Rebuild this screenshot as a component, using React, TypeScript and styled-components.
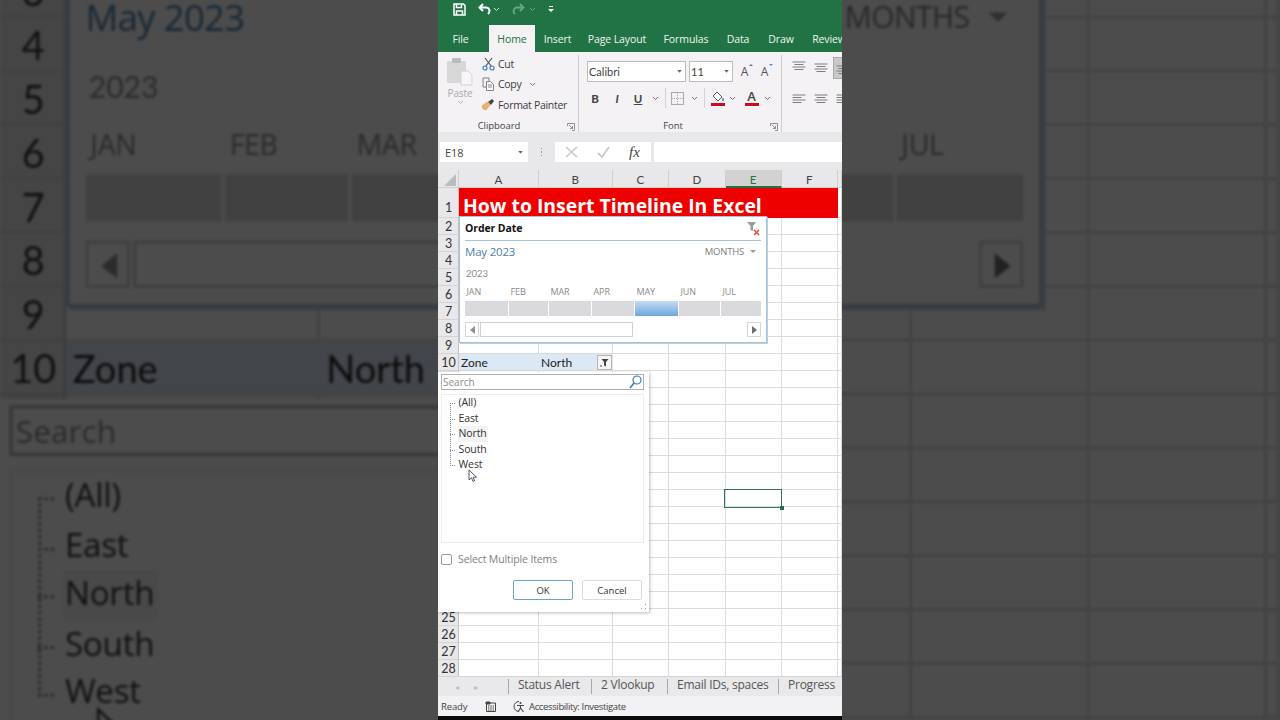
import React from "react";
import styled, { createGlobalStyle } from "styled-components";

const Global = createGlobalStyle`
  html, body { margin: 0; padding: 0; background: #000; }
  #root { width: 1280px; height: 720px; overflow: hidden; }
  * { box-sizing: border-box; }
`;
const UI = `"Open Sans", "Noto Sans", sans-serif`;
const CAL = `Lato, "Liberation Sans", sans-serif`;

const Page = styled.div`position: relative; width: 1280px; height: 720px; overflow: hidden; background: #4d4d4d; display: flex; justify-content: center;`;
const Backdrop = styled.div`
  position: absolute; left: 0; top: -241px; width: 404px; height: 507px;
  transform-origin: 0 0; transform: scale(3.168); filter: brightness(.3) blur(.45px);
`;
const Workbook = styled.div`position: relative; width: 404px; height: 720px; background: #fff; display: flex; flex-direction: column; overflow: hidden; font-family: ${UI}; color: #333;`;

const TitleBar = styled.div`height: 25px; flex: none; background: #217346; display: flex; align-items: center; padding: 0 0 7px 15px; color: #fff;`;
const QuickBtn = styled.span<{ $w: number; $faded?: boolean }>`width: ${p => p.$w}px; display: flex; align-items: center; opacity: ${p => (p.$faded ? 0.35 : 1)};`;
const TabBar = styled.div`height: 27px; flex: none; background: #217346; display: flex; align-items: stretch; padding-left: 4px; overflow: hidden;`;
const Tab = styled.div<{ $active?: boolean; $w: number }>`
  flex: none; width: ${p => p.$w}px; display: flex; align-items: center; justify-content: center; padding-top: 1px;
  font-size: 10.5px; letter-spacing: -.1px; white-space: nowrap;
  margin-left: ${p => (p.$active ? "10px" : "0")};
  color: ${p => (p.$active ? "#217346" : "#eef5f0")}; background: ${p => (p.$active ? "#f4f2f4" : "transparent")};
`;

const Ribbon = styled.div`height: 80px; flex: none; background: #f4f2f5; display: flex; overflow: hidden;`;
const Group = styled.div<{ $w: number }>`flex: none; width: ${p => p.$w}px; height: 78px; position: relative; border-right: 1px solid #cfcdd0; margin-top: 3px; display: flex; flex-direction: column;`;
const GroupBody = styled.div`flex: 1; display: flex;`;
const GroupLabel = styled.div<{ $pr: number }>`height: 14px; padding-right: ${p => p.$pr}px; text-align: center; font-size: 9.5px; letter-spacing: -.05px; color: #444; line-height: 13px;`;
const Launcher = styled.span`position: absolute; right: 3px; bottom: 2px; width: 8px; height: 8px; display: flex;`;

const PasteCol = styled.div`width: 43px; flex: none; display: flex; flex-direction: column; align-items: center; padding: 3px 0 0 1px; color: #a9a8aa; font-size: 10px; letter-spacing: -.1px;`;
const PasteLabel = styled.div`margin-top: 1px; line-height: 13px;`;
const ClipCol = styled.div`display: flex; flex-direction: column; gap: 3.5px;`;
const ClipRow = styled.div`display: flex; align-items: center; gap: 3px; height: 17px; font-size: 10.5px; letter-spacing: -.3px; color: #3c3c3c; white-space: nowrap;`;
const ClipIcon = styled.span`width: 14px; display: flex; justify-content: center;`;
const CopyChev = styled.span`margin-left: 5px; display: flex;`;

const FontBody = styled.div`flex: 1; display: flex; flex-direction: column; padding: 6px 0 0 8px;`;
const FontTop = styled.div`display: flex; align-items: center; gap: 3.5px; height: 20px;`;
const Combo = styled.div<{ $w: number }>`width: ${p => p.$w}px; height: 21px; background: #fff; border: 1px solid #bdbdbd; display: flex; align-items: center; justify-content: space-between; padding: 0 3px 0 1px; font-family: ${CAL}; font-size: 11px; color: #444;`;
const GrowBtn = styled.span`margin-left: 2.5px; width: 14px; font-size: 12px; color: #555; font-family: ${UI}; position: relative; display: flex; justify-content: center; &:first-of-type { margin-left: 1px; }`;
const Caret = styled.span<{ $d: boolean }>`position: absolute; right: -1px; top: 1px; border-left: 2px solid transparent; border-right: 2px solid transparent; ${p => (p.$d ? "border-top: 2px solid #4a90c8;" : "border-bottom: 2px solid #777;")}`;
const FontBottom = styled.div`display: flex; align-items: center; height: 24px; margin: 5px 0 0 -8px; padding-left: 8px;`;
const FmtBtn = styled.span<{ $w: number; $i?: boolean; $u?: boolean; $b?: boolean }>`
  width: ${p => p.$w}px; flex: none; display: flex; justify-content: center; font-family: ${CAL}; font-size: 11.5px; color: #444;
  font-weight: ${p => (p.$b ? 900 : 700)}; font-style: ${p => (p.$i ? "italic" : "normal")}; text-decoration: ${p => (p.$u ? "underline" : "none")};
`;
const Sep = styled.span`width: 1px; height: 20px; flex: none; background: #d4d2d5; margin-right: 5px;`;
const ColorBtn = styled.span<{ $ml?: number }>`width: 15px; flex: none; margin-left: ${p => p.$ml ?? 0}px; display: flex; flex-direction: column; align-items: center; font-size: 13px; font-weight: 600; line-height: 11px; color: #444;`;
const ColorBar = styled.span`width: 14px; height: 3px; background: #cc0a1a; margin-top: 1px;`;
const AlignBody = styled.div`flex: 1; display: flex; flex-direction: column; gap: 17px; padding: 9px 0 0 10px;`;
const AlignRow = styled.div`display: flex; gap: 8px; align-items: center; height: 14px;`;
const AlignBox = styled.span<{ $on?: boolean }>`width: 14px; height: ${p => (p.$on ? "20px" : "14px")}; display: flex; align-items: center; margin-left: ${p => (p.$on ? "-2px" : "0")}; padding-left: ${p => (p.$on ? "2px" : "0")}; background: ${p => (p.$on ? "#c9c8ca" : "transparent")}; outline: ${p => (p.$on ? "1px solid #aaa" : "none")};`;

const FormulaBar = styled.div`height: 38px; flex: none; background: #e8e7e9; display: flex; align-items: flex-start; padding: 10px 0 0 2px;`;
const NameBox = styled.div`width: 88px; height: 20px; background: #fff; display: flex; align-items: center; justify-content: space-between; padding: 0 5px 0 5px; font-size: 11px; letter-spacing: -.1px; color: #444;`;
const Dots = styled.div`width: 27px; height: 20px; display: flex; flex-direction: column; align-items: center; justify-content: center; gap: 2px;`;
const Dot = styled.i`width: 1.5px; height: 1.5px; background: #999; display: block;`;
const FxBox = styled.div`width: 96px; height: 20px; background: #fff; display: flex; align-items: center; padding-left: 10px; gap: 19px;`;
const Fx = styled.span`font-family: "Liberation Serif", serif; font-style: italic; font-size: 15px; color: #444;`;
const FormulaInput = styled.div`flex: 1; height: 20px; background: #fff; margin-left: 3px;`;

const COLS = "21px 80px 73.5px 56.5px 56.5px 56px 56.5px 4px";
const SheetBox = styled.div`position: relative; width: 404px; height: 506px; flex: none; background: #fff; overflow: hidden; font-family: ${CAL};`;
const Row = styled.div<{ $h: number }>`display: grid; grid-template-columns: ${COLS}; height: ${p => p.$h}px;`;
const Corner = styled.div`background: #e8e7e9; position: relative; border-right: 1px solid #cfcfcf; border-bottom: 1px solid #cfcfcf; display: flex; align-items: flex-end; justify-content: flex-end; padding: 0 2px 1px 0;`;
const ColHead = styled.div<{ $sel?: boolean }>`
  background: ${p => (p.$sel ? "#d3d1d2" : "#e8e7e9")}; border-right: 1px solid #cfcfcf;
  border-bottom: ${p => (p.$sel ? "2px solid #217346" : "1px solid #cfcfcf")};
  display: flex; align-items: center; justify-content: center; padding-top: 2px; font-size: 11.5px; color: ${p => (p.$sel ? "#217346" : "#444")};
`;
const RowHead = styled.div<{ $tall?: boolean }>`background: #e8e7e9; border-right: 1px solid #c4c4c4; border-bottom: 1px solid #d4d4d4; display: flex; align-items: center; justify-content: center; font-size: 12.5px; color: #333; padding: ${p => (p.$tall ? "9px 0 0 1px" : "0 0 0 1px")};`;
const Cell = styled.div<{ $fill?: boolean }>`background: ${p => (p.$fill ? "#dde8f5" : "#fff")}; border-right: 1px solid ${p => (p.$fill ? "#dde8f5" : "#dcdcdc")}; border-bottom: 1px solid #dcdcdc; display: flex; align-items: center; padding-left: 2px; font-size: 12px; font-weight: 400; color: #222; position: relative;`;
const TitleCell = styled.div`grid-column: 2 / span 6; background: #ee0000; color: #fff; font-family: "Open Sans", sans-serif; font-weight: 700; font-size: 19.4px; padding: 4px 0 0 4px; display: flex; align-items: center; white-space: nowrap; overflow: hidden;`;
const FilterBtn = styled.span`position: absolute; right: 0; top: 1px; width: 15px; height: 15px; background: #f6f6f6; border: 1px solid #b4b4b4; display: flex; align-items: center; justify-content: center;`;

const Slicer = styled.div`position: absolute; left: 21px; top: 46px; width: 308px; height: 127px; background: #fff; border: 1px solid #a4c3dd; box-shadow: 1px 1px 0 #b9d0e3; padding: 0 5px; display: flex; flex-direction: column;`;
const SlicerHead = styled.div`height: 24px; flex: none; border-bottom: 1px solid #a4c3dd; display: flex; align-items: center; justify-content: space-between; font-family: ${UI}; font-weight: 700; font-size: 10.5px; letter-spacing: -.1px; color: #111; padding-bottom: 1px;`;
const SlicerRange = styled.div`height: 21px; flex: none; display: flex; align-items: center; justify-content: space-between; padding-right: 5px;`;
const RangeLabel = styled.span`font-size: 11.5px; color: #4b7fab; font-family: ${UI}; letter-spacing: -.2px;`;
const LevelLabel = styled.span`font-size: 9.5px; color: #808080; display: flex; align-items: center; gap: 6px; font-family: ${UI}; letter-spacing: -.2px;`;
const TriDown = styled.i`border-left: 3px solid transparent; border-right: 3px solid transparent; border-top: 3px solid #9a9a9a; display: block;`;
const YearLabel = styled.div`height: 15px; margin-top: 4px; padding-left: 1px; font-size: 9.5px; color: #8c8c8c; line-height: 15px;`;
const MONTHS: [string, number, boolean?][] = [["JAN", 43], ["FEB", 39], ["MAR", 42], ["APR", 42], ["MAY", 43, true], ["JUN", 41], ["JUL", 40]];
const MonthGrid = styled.div`display: flex; gap: 1px; margin-top: 4px;`;
const MonthCol = styled.div<{ $w: number }>`width: ${p => p.$w}px; flex: none;`;
const MonthName = styled.div`height: 16px; padding-left: 1.5px; font-size: 9px; color: #8a8a8a; font-family: ${UI}; letter-spacing: -.1px; line-height: 13px;`;
const MonthBar = styled.div<{ $on?: boolean }>`height: 15px; background: ${p => (p.$on ? "linear-gradient(#c6dcf1, #6fa6dc)" : "#dad9db")};`;
const ScrollRow = styled.div`display: flex; height: 15px; margin-top: 6px; gap: 1px;`;
const ScrollBtn = styled.div`width: 14px; height: 15px; border: 1px solid #d6d6d6; background: #fff; display: flex; align-items: center; justify-content: center;`;
const Thumb = styled.div`width: 153px; border: 1px solid #cfcfcf; background: #fff;`;
const ScrollGap = styled.div`flex: 1;`;
const Tri = styled.i<{ $r?: boolean; $c: string }>`display: block; border-top: 4px solid transparent; border-bottom: 4px solid transparent; ${p => (p.$r ? `border-left: 5px solid ${p.$c};` : `border-right: 5px solid ${p.$c};`)}`;

const Popup = styled.div`position: absolute; left: 0; top: 202px; width: 211px; height: 240px; background: #fff; box-shadow: 1px 1px 3px rgba(0,0,0,.25); padding: 2px 5px 0 3px; display: flex; flex-direction: column;`;
const SearchBox = styled.div`height: 16px; flex: none; border: 1px solid #b0b0b0; display: flex; align-items: center; justify-content: space-between; padding: 0 1px 0 1px; font-family: ${UI}; font-size: 10px; color: #8a8a8a;`;
const TreeBox = styled.div`height: 149px; flex: none; margin-top: 4px; border: 1px solid #ededed; padding: 0 0 0 8px;`;
const TreeList = styled.div`position: relative; padding-left: 7.5px; &::before { content: ""; position: absolute; left: 0; top: 8px; bottom: 7px; border-left: 1px dotted #888; }`;
const TreeItem = styled.div<{ $hover?: boolean }>`position: relative; height: 15.5px; line-height: 15.5px; font-family: ${UI}; font-size: 10.5px; letter-spacing: -.1px; color: #333; width: fit-content; padding: 0 1px; background: ${p => (p.$hover ? "#f3f3f3" : "transparent")}; &::before { content: ""; position: absolute; left: -7.5px; top: 8px; width: 5px; border-top: 1px dotted #888; }`;
const CheckRow = styled.label`display: flex; align-items: center; gap: 6px; margin-top: 10px; height: 12px; font-family: ${UI}; font-size: 10.5px; letter-spacing: -.12px; color: #808080;`;
const CheckBox = styled.span`width: 11px; height: 11px; border: 1px solid #9a9a9a; border-radius: 2px; background: #fff;`;
const PopButtons = styled.div`display: flex; justify-content: flex-end; gap: 9px; margin-top: 15px; padding-right: 2px;`;
const PopBtn = styled.div<{ $primary?: boolean }>`width: 60px; height: 20px; border-radius: 2px; border: ${p => (p.$primary ? "1.5px solid #6aa6c4" : "1px solid #dcdcdc")}; display: flex; align-items: center; justify-content: center; font-family: ${UI}; font-size: 9.5px; color: #333; background: #fff;`;
const Grip = styled.span`position: absolute; right: 2px; bottom: 2px; display: flex;`;
const Pointer = styled.span`position: absolute; left: 30px; top: 97px; display: flex;`;
const Selection = styled.div`position: absolute; left: 286px; top: 318.5px; width: 58px; height: 19px; border: 1.5px solid #2f7350; &::after { content: ""; position: absolute; right: -3px; bottom: -3px; width: 4px; height: 4px; background: #217346; }`;

const SheetTabs = styled.div`height: 20px; flex: none; background: #e9e8ea; border-top: 1px solid #d4d4d4; display: flex; align-items: center; color: #555; overflow: hidden;`;
const Arrows = styled.div`width: 70px; flex: none; display: flex; gap: 15px; padding-left: 17px; color: #bbb; font-size: 8px;`;
const SheetTab = styled.div<{ $w: number }>`flex: none; width: ${p => p.$w}px; height: 15px; border-left: 1px solid #a8a8a8; padding-left: 9px; line-height: 11px; white-space: nowrap; letter-spacing: -.24px; font-family: "Open Sans", sans-serif; font-size: 12px;`;
const StatusBar = styled.div`height: 20px; flex: none; background: #f2f1f3; display: flex; align-items: center; font-size: 9.5px; letter-spacing: -.15px; color: #444; padding-left: 3px;`;
const StatusItem = styled.span<{ $w: number }>`width: ${p => p.$w}px; flex: none; display: flex; align-items: center; gap: 2px; white-space: nowrap;`;
const StatusText = styled.span`letter-spacing: -.36px;`;
const Bottom = styled.div`flex: 1; background: #0b0b0b;`;

const Chev = ({ c = "#777" }: { c?: string }) => (
  <svg width="7" height="5" viewBox="0 0 7 5"><path d="M1 1l2.5 2.5L6 1" fill="none" stroke={c} strokeWidth="1" /></svg>
);
const ComboArrow = () => <svg width="5" height="3" viewBox="0 0 6 4"><path d="M0 0h6L3 3.5z" fill="#666" /></svg>;
const SaveIcon = () => (
  <svg width="13" height="13" viewBox="0 0 13 13" fill="none" stroke="#fff" strokeWidth="1.5"><path d="M1 1h9.5L12 2.5V12H1z" /><path d="M3.5 1v3.5h5V1M3.5 12V8h6v4" /></svg>
);
const UndoIcon = ({ c = "#fff" }: { c?: string }) => (
  <svg width="14" height="12" viewBox="0 0 14 12" fill="none" stroke={c} strokeWidth="2"><path d="M5 1L1.5 4.5 5 8" /><path d="M2 4.5h6a3.5 3.5 0 0 1 3.5 3.5c0 1.2-.6 2.2-1.5 3" /></svg>
);
const PasteIcon = () => (
  <svg width="26" height="28" viewBox="0 0 26 28"><rect x="0" y="3" width="19" height="22" fill="#d9d8d9" /><rect x="5" y="0" width="9" height="5" rx="1" fill="#bdbcbd" /><path d="M14 13h7l4 4v10H14z" fill="#f8f7f8" stroke="#d5cfd6" /></svg>
);
const Scissors = () => (
  <svg width="13" height="14" viewBox="0 0 13 14" fill="none"><path d="M3 1l6.5 8.5M10 1L3.5 9.5" stroke="#555" strokeWidth="1.2" /><circle cx="3" cy="11" r="2" stroke="#3f7fbf" strokeWidth="1.2" /><circle cx="10" cy="11" r="2" stroke="#3f7fbf" strokeWidth="1.2" /></svg>
);
const CopyIcon = () => (
  <svg width="13" height="14" viewBox="0 0 13 14" fill="none" stroke="#777" strokeWidth=".9"><path d="M1 1h6v3M1 1v9h3" /><path d="M4.5 4.5h4l3 3v6h-7z" fill="#fff" /><path d="M6 8h4M6 10h4" /></svg>
);
const BrushIcon = () => (
  <svg width="14" height="13" viewBox="0 0 14 13"><path d="M1 8l5-4 3 3-4 5-3-1z" fill="#e8b565" stroke="#c9974a" strokeWidth=".5" /><path d="M7 4l4-3 2 2-3 4z" fill="#444" /></svg>
);
const LaunchIcon = () => (
  <svg width="8" height="8" viewBox="0 0 8 8" fill="none" stroke="#777" strokeWidth=".8"><path d="M.5 3V.5H7.5V7.5H5" /><path d="M2 2l3.5 3.5M5.5 3v2.5H3" /></svg>
);
const BorderIcon = () => (
  <svg width="13" height="13" viewBox="0 0 13 13" fill="none" stroke="#999" strokeWidth=".8" style={{ flex: "none" }}><rect x=".5" y=".5" width="12" height="12" /><path d="M6.5 1v11M1 6.5h11" strokeDasharray="1 1" /></svg>
);
const BucketIcon = () => (
  <svg width="14" height="11" viewBox="0 0 14 11"><path d="M6 1l5 5-4 4-5-5z" fill="#fff" stroke="#555" strokeWidth="1" /><path d="M12 6.5c.8 1.2 1 2 1 2.5a1 1 0 0 1-2 0c0-.5.3-1.3 1-2.5z" fill="#3f7fbf" /></svg>
);
const AlignLines = ({ y, kind }: { y: number; kind: "l" | "c" }) => {
  const rows = [0, 1, 2, 3].map(i => y + i * 2.5);
  return (
    <svg width="14" height="14" viewBox="0 0 14 14" stroke="#7d7d7d" strokeWidth="1" style={{ flex: "none" }}>
      {rows.map((r, i) => {
        const w = i % 2 ? 9 : 13;
        const x = kind === "l" ? 0.5 : (14 - w) / 2;
        return <path key={i} d={`M${x} ${r}h${w}`} />;
      })}
    </svg>
  );
};
const ClearFilter = () => (
  <svg width="14" height="15" viewBox="0 0 14 15"><path d="M0 1h9L6 5v5L3.5 9V5z" fill="#9a9a9a" /><path d="M7 9l5 5M12 9l-5 5" stroke="#e04b2f" strokeWidth="1.5" /></svg>
);
const FilterIcon = () => (
  <svg width="9" height="9" viewBox="0 0 9 9"><path d="M1.5 1h7L6 4v4.5L4 7.5V4z" fill="#444" /><path d="M0 8h2" stroke="#444" /></svg>
);
const SearchIcon = () => (
  <svg width="13" height="14" viewBox="0 0 13 14" fill="none" stroke="#3d7ea8" strokeWidth="1.2"><circle cx="8" cy="5" r="4" /><path d="M5 8l-4 5" strokeWidth="1.6" /></svg>
);
const CursorIcon = () => (
  <svg width="10" height="14" viewBox="0 0 10 14"><path d="M1 1v10l2.5-2.3L5 12.5l1.6-.7-1.5-3.6H8.5z" fill="#fff" stroke="#333" strokeWidth=".8" /></svg>
);
const GripIcon = () => (
  <svg width="6" height="6" viewBox="0 0 6 6" fill="#999"><rect x="4" y="0" width="1" height="1" /><rect x="4" y="4" width="1" height="1" /><rect x="0" y="4" width="1" height="1" /></svg>
);
const SheetViewIcon = () => (
  <svg width="12" height="11" viewBox="0 0 12 11" fill="none" stroke="#444"><path d="M1.5 2h9v8.5h-9z" /><path d="M3 5h6M3 7h6M3 9h6" strokeDasharray="1.5 .8" /><path d="M1 1h4v2H1z" fill="#444" /></svg>
);
const A11yIcon = () => (
  <svg width="15" height="13" viewBox="0 0 15 13" fill="none" stroke="#444"><path d="M7 1.5a5 5 0 1 0 0 10" /><circle cx="8.5" cy="3" r="1" fill="#444" stroke="none" /><path d="M5 5.5h7M8.5 5.5v2.5L6 12M8.5 8l3 4" strokeWidth="1.1" /></svg>
);

const COL_LABELS = ["A", "B", "C", "D", "E", "F"];

const Sheet = () => {
  const rows = Array.from({ length: 28 }, (_, i) => i + 1);
  return (
    <SheetBox>
      <Row $h={18}>
        <Corner><svg width="12" height="12" viewBox="0 0 12 12"><path d="M12 0v12H0z" fill="#bcbbbd" /></svg></Corner>
        {COL_LABELS.map(c => <ColHead key={c} $sel={c === "E"}>{c}</ColHead>)}
        <ColHead />
      </Row>
      {rows.map(r => (
        <Row key={r} $h={r === 1 ? 30 : 17}>
          <RowHead $tall={r === 1}>{r <= 10 || r >= 25 ? r : ""}</RowHead>
          {r === 1 ? (
            <>
              <TitleCell>How to Insert Timeline In Excel</TitleCell>
              <Cell />
            </>
          ) : r === 10 ? (
            <>
              <Cell $fill>Zone</Cell>
              <Cell $fill>North<FilterBtn><FilterIcon /></FilterBtn></Cell>
              <Cell /><Cell /><Cell /><Cell /><Cell />
            </>
          ) : (
            <><Cell /><Cell /><Cell /><Cell /><Cell /><Cell /><Cell /></>
          )}
        </Row>
      ))}
      <Selection />
      <Slicer>
        <SlicerHead>Order Date<ClearFilter /></SlicerHead>
        <SlicerRange>
          <RangeLabel>May 2023</RangeLabel>
          <LevelLabel>MONTHS<TriDown /></LevelLabel>
        </SlicerRange>
        <YearLabel>2023</YearLabel>
        <MonthGrid>
          {MONTHS.map(([m, w, on]) => (
            <MonthCol key={m} $w={w}>
              <MonthName>{m}</MonthName>
              <MonthBar $on={on} />
            </MonthCol>
          ))}
        </MonthGrid>
        <ScrollRow>
          <ScrollBtn><Tri $c="#8f8f8f" /></ScrollBtn>
          <Thumb />
          <ScrollGap />
          <ScrollBtn><Tri $r $c="#6f6f6f" /></ScrollBtn>
        </ScrollRow>
      </Slicer>
      <Popup>
        <SearchBox>Search<SearchIcon /></SearchBox>
        <TreeBox>
          <TreeList>
            <TreeItem>(All)</TreeItem>
            <TreeItem>East</TreeItem>
            <TreeItem $hover>North</TreeItem>
            <TreeItem>South</TreeItem>
            <TreeItem>West</TreeItem>
          </TreeList>
        </TreeBox>
        <CheckRow><CheckBox />Select Multiple Items</CheckRow>
        <PopButtons>
          <PopBtn $primary>OK</PopBtn>
          <PopBtn>Cancel</PopBtn>
        </PopButtons>
        <Grip><GripIcon /></Grip>
        <Pointer><CursorIcon /></Pointer>
      </Popup>
    </SheetBox>
  );
};

export default function App() {
  return (
    <Page>
      <Global />
      <Backdrop><Sheet /></Backdrop>
      <Workbook>
        <TitleBar>
          <QuickBtn $w={25}><SaveIcon /></QuickBtn>
          <QuickBtn $w={15}><UndoIcon /></QuickBtn>
          <QuickBtn $w={18}><Chev c="#cfe3d6" /></QuickBtn>
          <QuickBtn $w={18} $faded><svg width="14" height="12" viewBox="0 0 14 12" style={{ transform: "scaleX(-1)" }} fill="none" stroke="#fff" strokeWidth="1.8"><path d="M5 1L1.5 4.5 5 8" /><path d="M2 4.5h6a3.5 3.5 0 0 1 3.5 3.5c0 1.2-.6 2.2-1.5 3" /></svg></QuickBtn>
          <QuickBtn $w={19} $faded><Chev c="#fff" /></QuickBtn>
          <QuickBtn $w={10}><svg width="6" height="6" viewBox="0 0 6 6" fill="#fff"><path d="M1 0h4v1H1zM0 3h6L3 6z" /></svg></QuickBtn>
        </TitleBar>
        <TabBar>
          <Tab $w={37}>File</Tab>
          <Tab $active $w={46}>Home</Tab>
          <Tab $w={45}>Insert</Tab>
          <Tab $w={74}>Page Layout</Tab>
          <Tab $w={64}>Formulas</Tab>
          <Tab $w={40}>Data</Tab>
          <Tab $w={46}>Draw</Tab>
          <Tab $w={50}>Review</Tab>
        </TabBar>
        <Ribbon>
          <Group $w={141}>
            <GroupBody>
              <PasteCol>
                <PasteIcon />
                <PasteLabel>Paste</PasteLabel>
                <Chev c="#b5b5b5" />
              </PasteCol>
              <ClipCol>
                <ClipRow><ClipIcon><Scissors /></ClipIcon>Cut</ClipRow>
                <ClipRow><ClipIcon><CopyIcon /></ClipIcon>Copy<CopyChev><Chev /></CopyChev></ClipRow>
                <ClipRow><ClipIcon><BrushIcon /></ClipIcon>Format Painter</ClipRow>
              </ClipCol>
            </GroupBody>
            <GroupLabel $pr={18}>Clipboard</GroupLabel>
            <Launcher><LaunchIcon /></Launcher>
          </Group>
          <Group $w={203}>
            <FontBody>
              <FontTop>
                <Combo $w={98.5}>Calibri<ComboArrow /></Combo>
                <Combo $w={44}>11<ComboArrow /></Combo>
                <GrowBtn>A<Caret $d={false} /></GrowBtn>
                <GrowBtn>A<Caret $d /></GrowBtn>
              </FontTop>
              <FontBottom>
                <FmtBtn $w={16} $b>B</FmtBtn>
                <FmtBtn $w={28} $i>I</FmtBtn>
                <FmtBtn $w={14} $u>U</FmtBtn>
                <FmtBtn $w={20}><Chev /></FmtBtn>
                <Sep />
                <BorderIcon />
                <FmtBtn $w={20}><Chev /></FmtBtn>
                <Sep />
                <ColorBtn><BucketIcon /><ColorBar /></ColorBtn>
                <FmtBtn $w={14}><Chev /></FmtBtn>
                <ColorBtn $ml={5}>A<ColorBar /></ColorBtn>
                <FmtBtn $w={16}><Chev /></FmtBtn>
              </FontBottom>
            </FontBody>
            <GroupLabel $pr={14}>Font</GroupLabel>
            <Launcher><LaunchIcon /></Launcher>
          </Group>
          <AlignBody>
            <AlignRow>
              <AlignBox><AlignLines y={1} kind="c" /></AlignBox>
              <AlignBox><AlignLines y={3} kind="c" /></AlignBox>
              <AlignBox $on><AlignLines y={5} kind="c" /></AlignBox>
            </AlignRow>
            <AlignRow>
              <AlignBox><AlignLines y={3} kind="l" /></AlignBox>
              <AlignBox><AlignLines y={3} kind="c" /></AlignBox>
              <AlignBox><AlignLines y={3} kind="l" /></AlignBox>
            </AlignRow>
          </AlignBody>
        </Ribbon>
        <FormulaBar>
          <NameBox>E18<ComboArrow /></NameBox>
          <Dots><Dot /><Dot /><Dot /></Dots>
          <FxBox>
            <svg width="13" height="12" viewBox="0 0 13 12" stroke="#c9c9c9" strokeWidth="1.5"><path d="M1 1l11 10M12 1L1 11" /></svg>
            <svg width="13" height="12" viewBox="0 0 13 12" fill="none" stroke="#c9c9c9" strokeWidth="1.8"><path d="M1 7l4 4 7-10" /></svg>
            <Fx>fx</Fx>
          </FxBox>
          <FormulaInput />
        </FormulaBar>
        <Sheet />
        <SheetTabs>
          <Arrows><span>◂</span><span>▸</span></Arrows>
          <SheetTab $w={83}>Status Alert</SheetTab>
          <SheetTab $w={76}>2 Vlookup</SheetTab>
          <SheetTab $w={111}>Email IDs, spaces</SheetTab>
          <SheetTab $w={70}>Progress</SheetTab>
        </SheetTabs>
        <StatusBar>
          <StatusItem $w={44}>Ready</StatusItem>
          <StatusItem $w={27}><SheetViewIcon /></StatusItem>
          <StatusItem $w={200}><A11yIcon /><StatusText>Accessibility: Investigate</StatusText></StatusItem>
        </StatusBar>
        <Bottom />
      </Workbook>
    </Page>
  );
}
